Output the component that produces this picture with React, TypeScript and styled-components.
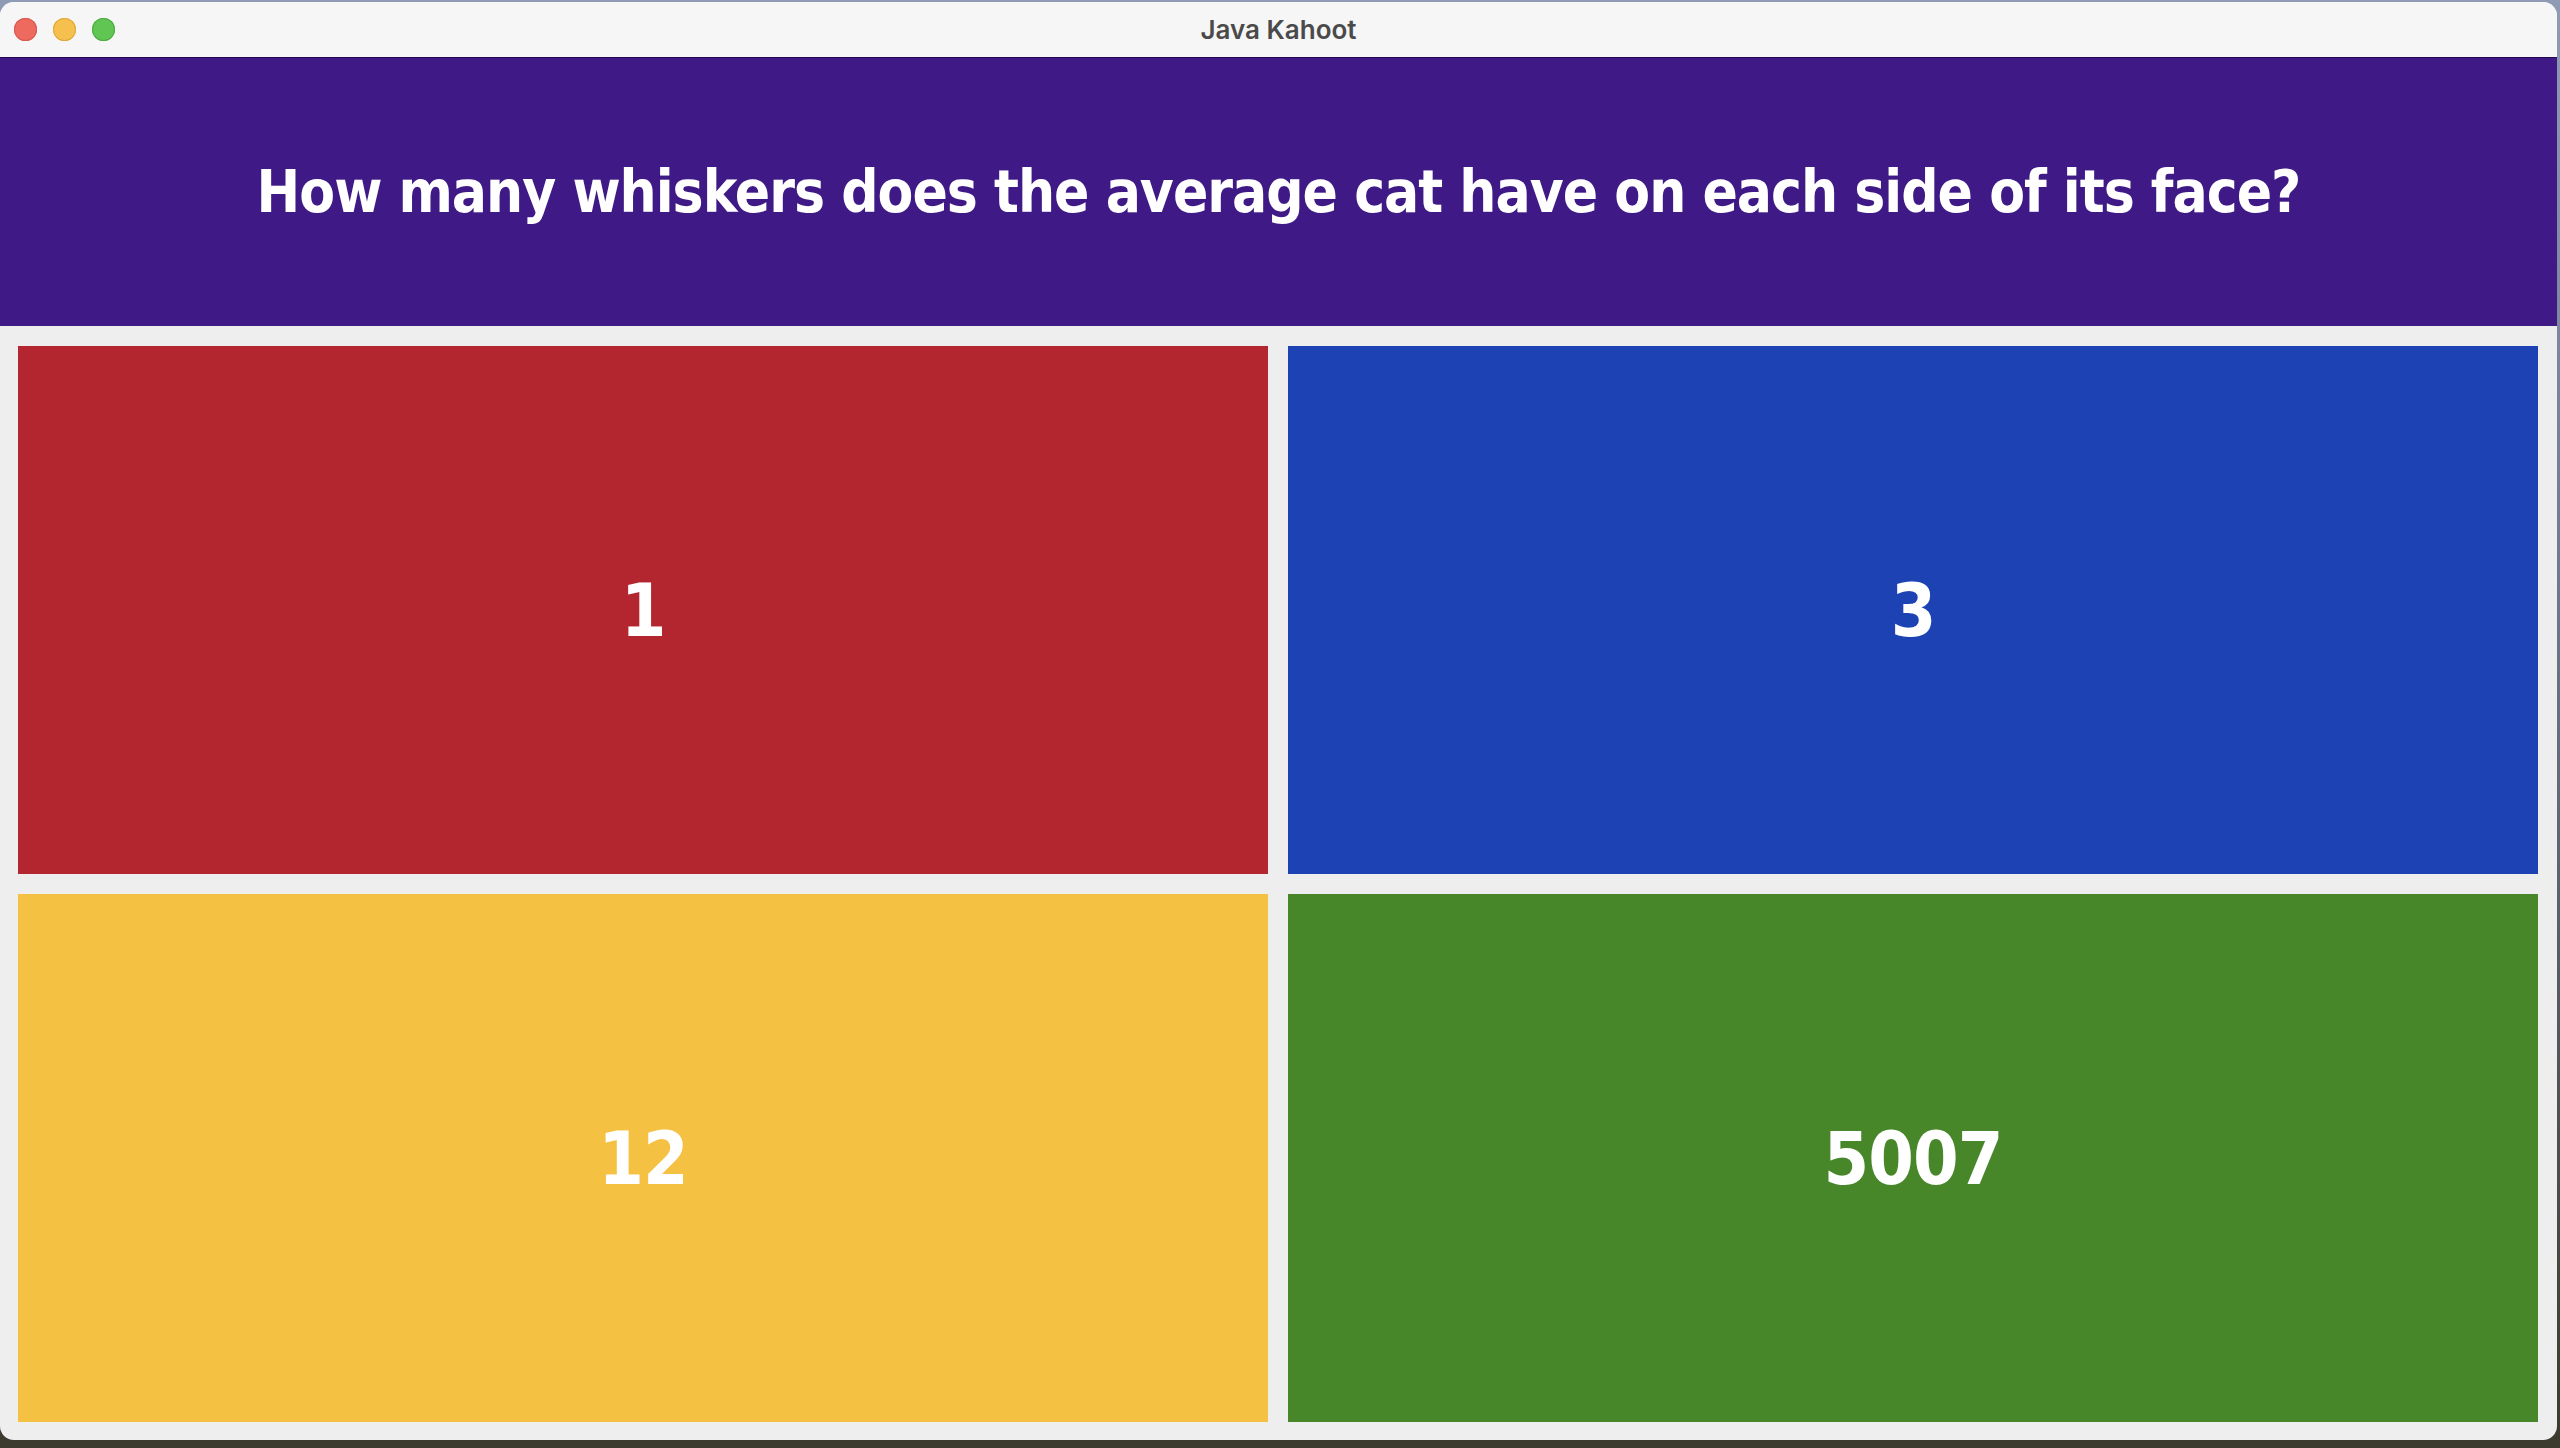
import React from "react";
import styled, { createGlobalStyle } from "styled-components";

const GlobalStyle = createGlobalStyle`
  html, body {
    margin: 0;
    padding: 0;
  }
  body {
    width: 2560px;
    height: 1448px;
    overflow: hidden;
    background: linear-gradient(180deg, #8f9bb4 0px, #6f7890 40%, #3b3a2c 100%);
    font-family: "DejaVu Sans", sans-serif;
  }
`;

const Window = styled.div`
  margin-top: 2px;
  width: 2557px;
  height: 1438px;
  border-radius: 14px;
  overflow: hidden;
  background: #eeeeee;
  display: flex;
  flex-direction: column;
`;

const TitleBar = styled.div`
  position: relative;
  height: 55px;
  flex: none;
  background: #f6f6f6;
  border-bottom: 1px solid #23094f;
  display: flex;
  align-items: center;
  justify-content: center;
`;

const Lights = styled.div`
  position: absolute;
  left: 14px;
  top: 16px;
  display: flex;
  gap: 16px;
`;

const Light = styled.span<{ $fill: string; $edge: string }>`
  width: 23px;
  height: 23px;
  border-radius: 50%;
  background: ${(p) => p.$fill};
  box-shadow: inset 0 0 0 1px ${(p) => p.$edge};
`;

const Title = styled.div`
  font-family: Inter, "Liberation Sans", sans-serif;
  font-weight: 600;
  font-size: 26px;
  color: #4a4a4a;
`;

const Header = styled.header`
  height: 268px;
  flex: none;
  background: #3f1a87;
  display: flex;
  align-items: center;
  justify-content: center;
`;

const Question = styled.h1`
  margin: 0;
  color: #ffffff;
  font-family: "DejaVu Sans Condensed", "DejaVu Sans", sans-serif;
  font-weight: bold;
  font-size: 58px;
  letter-spacing: -1px;
`;

const Grid = styled.main`
  flex: 1;
  display: grid;
  grid-template-columns: 1fr 1fr;
  grid-template-rows: 1fr 1fr;
  gap: 20px;
  padding: 20px 19px 18px 18px;
`;

const Answer = styled.button<{ $color: string }>`
  border: none;
  margin: 0;
  padding: 0;
  background: ${(p) => p.$color};
  color: #ffffff;
  font-family: "DejaVu Sans Condensed", "DejaVu Sans", sans-serif;
  font-weight: bold;
  font-size: 73px;
  letter-spacing: -1px;
  display: flex;
  align-items: center;
  justify-content: center;
  cursor: pointer;
`;

const answers = [
  { text: "1", color: "#b3262f" },
  { text: "3", color: "#1c42b3" },
  { text: "12", color: "#f5c143" },
  { text: "5007", color: "#47872a" },
];

export default function App() {
  return (
    <>
      <GlobalStyle />
      <Window>
        <TitleBar>
          <Lights>
            <Light $fill="#ee6a5f" $edge="#d95a50" />
            <Light $fill="#f6c04f" $edge="#dfa93c" />
            <Light $fill="#61c554" $edge="#4fae43" />
          </Lights>
          <Title>Java Kahoot</Title>
        </TitleBar>
        <Header>
          <Question>How many whiskers does the average cat have on each side of its face?</Question>
        </Header>
        <Grid>
          {answers.map((a) => (
            <Answer key={a.text} $color={a.color}>
              {a.text}
            </Answer>
          ))}
        </Grid>
      </Window>
    </>
  );
}
